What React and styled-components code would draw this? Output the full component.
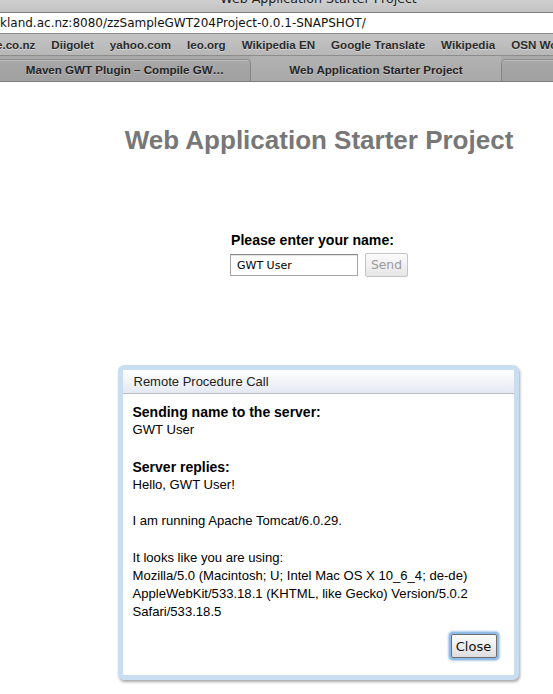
import React from "react";
import styled, { createGlobalStyle } from "styled-components";

const Global = createGlobalStyle`
  html, body { margin: 0; padding: 0; background: #fff; overflow: hidden; }
  body { font-family: "Liberation Sans", Arial, sans-serif; }
`;

const Window = styled.div`
  width: 553px;
  height: 694px;
  overflow: hidden;
  display: flex;
  flex-direction: column;
`;

const TitleBar = styled.div`
  height: 12px;
  flex: none;
  overflow: hidden;
  background: linear-gradient(#cfcfcf, #c2c2c2);
  display: flex;
  justify-content: center;
`;

const TitleText = styled.span`
  margin-top: -10px;
  margin-left: 84px;
  font-family: "DejaVu Sans", sans-serif;
  font-size: 12.6px;
  line-height: 18px;
  color: #222;
  white-space: nowrap;
`;

const AddressBar = styled.div`
  height: 20px;
  flex: none;
  background: #fff;
  border-top: 1px solid #7c7c7c;
  border-bottom: 1px solid #8a8a8a;
  display: flex;
  align-items: center;
  font-family: "DejaVu Sans", sans-serif;
  font-size: 12px;
  color: #111;
  white-space: nowrap;
`;

const Bookmarks = styled.div`
  height: 21px;
  flex: none;
  background: linear-gradient(#c4c4c4, #b7b7b7);
  border-bottom: 1px solid #8c8c8c;
  display: flex;
  align-items: center;
  gap: 16px;
  white-space: nowrap;
  overflow: hidden;
`;

const Bookmark = styled.span`
  font-family: "Liberation Sans", Arial, sans-serif;
  font-weight: bold;
  font-size: 11.6px;
  color: #2b2b2b;
  text-shadow: 0 1px 0 rgba(255, 255, 255, 0.45);
  margin-left: ${(p) => (p.$first ? "-4px" : "0")};
`;

const TabBar = styled.div`
  height: 25px;
  flex: none;
  background: #aaaaaa;
  border-bottom: 1px solid #7e7e7e;
  display: flex;
  align-items: stretch;
`;

const Tab = styled.div`
  flex: ${(p) => (p.$grow ? "1" : "none")};
  width: ${(p) => (p.$w ? p.$w + "px" : "auto")};
  margin-top: ${(p) => (p.$active ? "0" : "3px")};
  background: ${(p) =>
    p.$active ? "linear-gradient(#b2b2b2, #a9a9a9)" : "linear-gradient(#a8a8a8, #a0a0a0)"};
  border-top: ${(p) => (p.$active ? "none" : "1px solid #8e8e8e")};
  box-shadow: ${(p) => (p.$active ? "none" : "inset 0 1px 0 rgba(255,255,255,0.25)")};
  border-left: ${(p) => (p.$side === "right" ? "1px solid #858585" : "none")};
  border-right: ${(p) => (p.$side === "left" ? "1px solid #858585" : "none")};
  border-top-right-radius: ${(p) => (p.$side === "left" ? "5px" : "0")};
  border-top-left-radius: ${(p) => (p.$side === "right" ? "5px" : "0")};
  display: flex;
  align-items: center;
  justify-content: center;
  font-family: "Liberation Sans", Arial, sans-serif;
  font-weight: bold;
  font-size: 11.6px;
  color: #262626;
  text-shadow: 0 1px 0 rgba(255, 255, 255, 0.35);
  white-space: nowrap;
  padding-bottom: ${(p) => (p.$active ? "0" : "2px")};
  padding-top: ${(p) => (p.$active ? "1px" : "0")};
`;

const Page = styled.div`
  width: 638px;
  flex: none;
  display: flex;
  flex-direction: column;
  align-items: center;
`;

const Heading = styled.h1`
  margin: 43px 0 0;
  font-family: "Liberation Sans", Arial, sans-serif;
  font-size: 26px;
  font-weight: bold;
  color: #777777;
  text-align: center;
`;

const Form = styled.div`
  margin-top: 75px;
  display: flex;
  flex-direction: column;
  gap: 4px;
`;

const Label = styled.div`
  font-family: "Liberation Sans", Arial, sans-serif;
  font-weight: bold;
  font-size: 14.1px;
  line-height: 18px;
  color: #000;
  padding-left: 1px;
`;

const Row = styled.div`
  display: flex;
  align-items: center;
  gap: 7px;
`;

const NameField = styled.div`
  width: 114px;
  height: 20px;
  border: 1px solid #a5a5a5;
  border-top-color: #8a8a8a;
  padding: 0 6px;
  display: flex;
  align-items: center;
  font-family: "DejaVu Sans", sans-serif;
  font-size: 11px;
  color: #000;
  box-shadow: inset 0 1px 1px rgba(0, 0, 0, 0.12);
`;

const SendButton = styled.div`
  width: 41px;
  height: 22px;
  border: 1px solid #c4c4c4;
  border-radius: 2px;
  background: linear-gradient(#fbfbfb, #e6e6e6);
  display: flex;
  align-items: center;
  justify-content: center;
  font-family: "DejaVu Sans", sans-serif;
  font-size: 12.3px;
  color: #9a9a9a;
`;

const Dialog = styled.div`
  margin-top: 88px;
  margin-left: -2px;
  width: 391px;
  border: 5px solid #cadef2;
  border-radius: 6px;
  background: #fff;
  box-shadow: 1px 2px 3px rgba(0, 0, 0, 0.35);
`;

const Caption = styled.div`
  height: 23px;
  border-bottom: 1px solid #bdbdbd;
  background: linear-gradient(#ffffff, #e4e9f2);
  padding-left: 11px;
  display: flex;
  align-items: center;
  font-family: "Liberation Sans", Arial, sans-serif;
  font-size: 13px;
  color: #222;
`;

const Body = styled.div`
  padding: 9px 10px 17px;
  display: flex;
  flex-direction: column;
`;

const Line = styled.div`
  font-family: "Liberation Sans", Arial, sans-serif;
  font-size: ${(p) => (p.$bold ? "14px" : "13.1px")};
  font-weight: ${(p) => (p.$bold ? "bold" : "normal")};
  line-height: 18.2px;
  min-height: 18.2px;
  color: #000;
  white-space: nowrap;
`;

const Actions = styled.div`
  margin-top: 13px;
  display: flex;
  justify-content: flex-end;
  padding-right: 7px;
`;

const CloseButton = styled.div`
  width: 44px;
  height: 22px;
  border: 1px solid #6d6d6d;
  border-radius: 2px;
  background: linear-gradient(#fdfdfd, #dedede);
  box-shadow: 0 0 0 2px #8fbbea, 0 0 2px 3px rgba(110, 160, 225, 0.55);
  display: flex;
  align-items: center;
  justify-content: center;
  font-family: "DejaVu Sans", sans-serif;
  font-size: 13px;
  color: #111;
`;

const bookmarks = [
  "e.co.nz",
  "Diigolet",
  "yahoo.com",
  "leo.org",
  "Wikipedia EN",
  "Google Translate",
  "Wikipedia",
  "OSN Wo",
];

const lines = [
  { t: "Sending name to the server:", b: true },
  { t: "GWT User" },
  { t: "" },
  { t: "Server replies:", b: true },
  { t: "Hello, GWT User!" },
  { t: "" },
  { t: "I am running Apache Tomcat/6.0.29." },
  { t: "" },
  { t: "It looks like you are using:" },
  { t: "Mozilla/5.0 (Macintosh; U; Intel Mac OS X 10_6_4; de-de)" },
  { t: "AppleWebKit/533.18.1 (KHTML, like Gecko) Version/5.0.2" },
  { t: "Safari/533.18.5" },
];

export default function App() {
  return (
    <Window>
      <Global />
      <TitleBar>
        <TitleText>Web Application Starter Project</TitleText>
      </TitleBar>
      <AddressBar>kland.ac.nz:8080/zzSampleGWT204Project-0.0.1-SNAPSHOT/</AddressBar>
      <Bookmarks>
        {bookmarks.map((b, i) => (
          <Bookmark key={b + i} $first={i === 0}>
            {b}
          </Bookmark>
        ))}
      </Bookmarks>
      <TabBar>
        <Tab $w={250} $side="left">Maven GWT Plugin – Compile GW…</Tab>
        <Tab $w={250} $active>Web Application Starter Project</Tab>
        <Tab $grow $side="right" />
      </TabBar>
      <Page>
        <Heading>Web Application Starter Project</Heading>
        <Form>
          <Label>Please enter your name:</Label>
          <Row>
            <NameField>GWT User</NameField>
            <SendButton>Send</SendButton>
          </Row>
        </Form>
        <Dialog>
          <Caption>Remote Procedure Call</Caption>
          <Body>
            {lines.map((l, i) => (
              <Line key={i} $bold={l.b}>
                {l.t}
              </Line>
            ))}
            <Actions>
              <CloseButton>Close</CloseButton>
            </Actions>
          </Body>
        </Dialog>
      </Page>
    </Window>
  );
}
